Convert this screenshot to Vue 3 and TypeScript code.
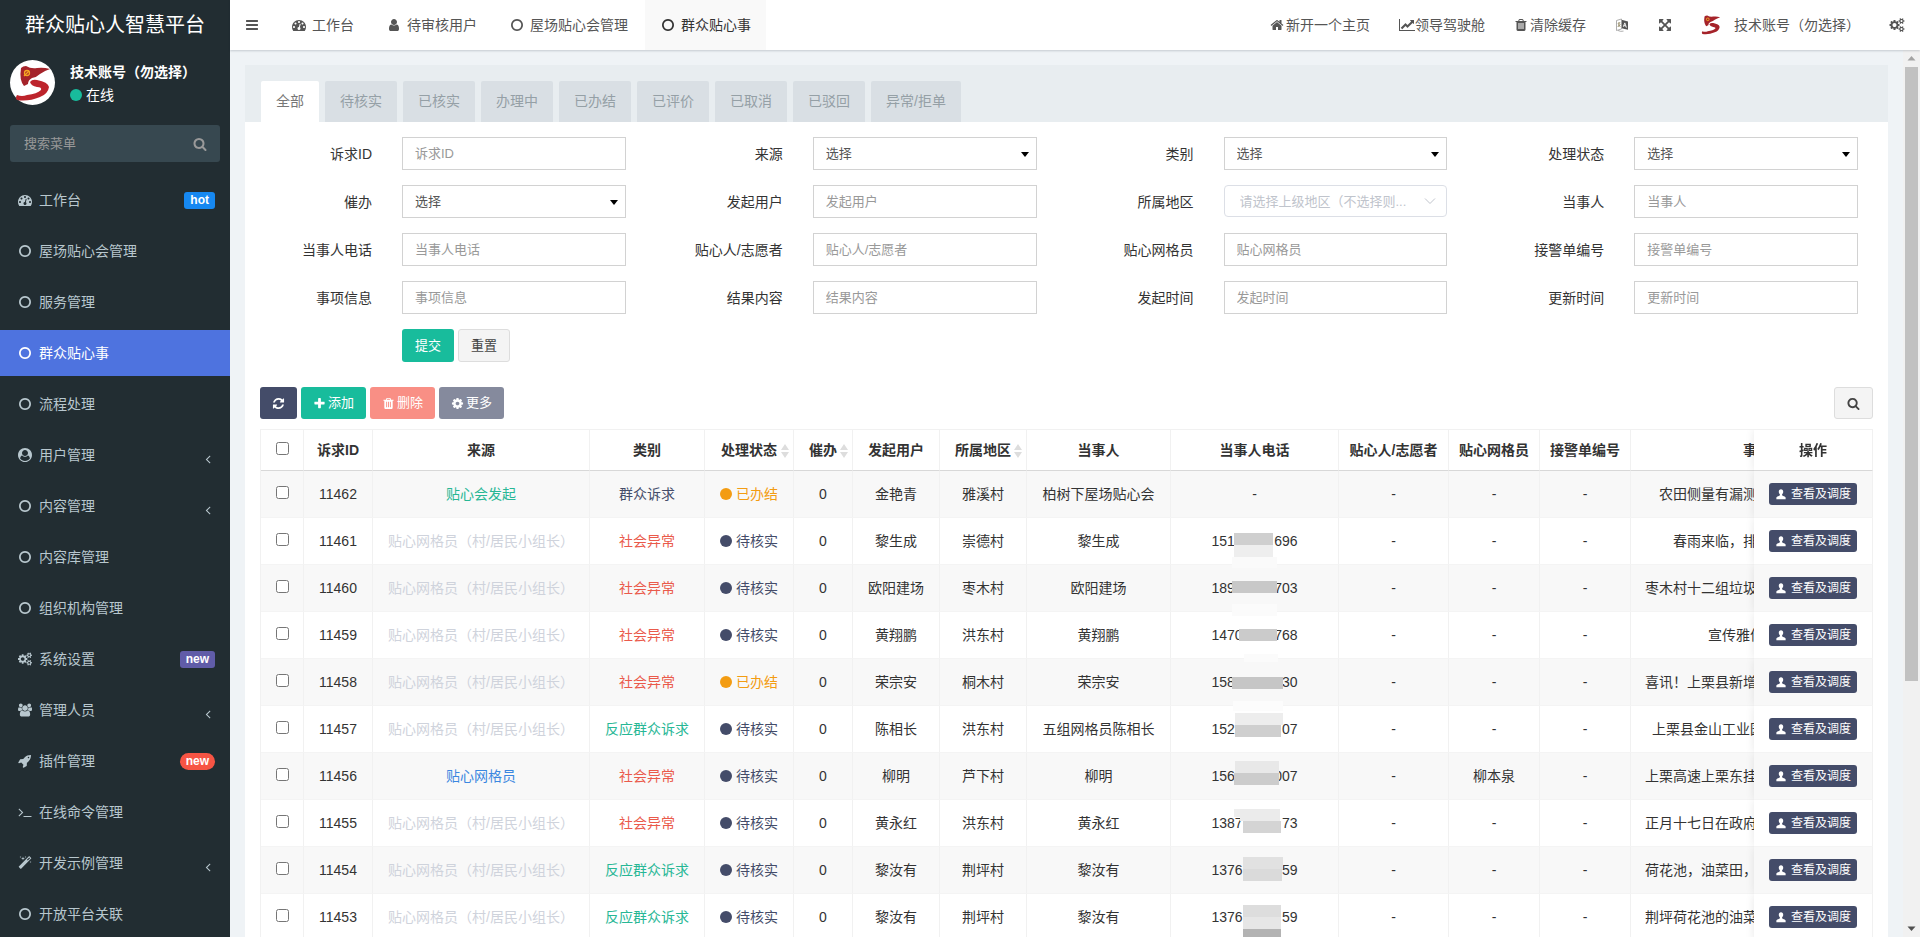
<script setup lang="ts">
import { ref } from 'vue'

interface Glyph { box: string; d: string }
interface MenuItem { icon: string; text: string; badge?: string; tone?: string; arrow?: boolean; active?: boolean }
interface Field { id: string; label: string; kind: 'text' | 'select' | 'region' }
interface Block { x: number; y: number; w: number; h: number; c: string }
interface Phone { head: string; tail: string; blocks: Block[] }
interface Row {
  id: number; source: string; sourceTone: string; kind: string; kindTone: string; done?: boolean
  user: string; area: string; party: string; phone?: Phone; grid?: string; text: string; chars: number
}

const square = '0 0 1792 1792'
const gearSmall = 'm640 533v140q0 16-149 31-12 27-30 52 51 113 51 138 0 4-4 7-122 71-124 71-8 0-46-47t-52-68q-20 2-30 2t-30-2q-14 21-52 68t-46 47q-2 0-124-71-4-3-4-7 0-25 51-138-18-25-30-52-149-15-149-31v-140q0-16 149-31 13-29 30-52-51-113-51-138 0-4 4-7 4-2 35-20t59-34 30-16q8 0 46 46.5t52 67.5q20-2 30-2t30 2q51-71 92-112l6-2q4 0 124 70 4 3 4 7 0 25-51 138 17 23 30 52 149 15 149 31zm0-1024v140q0 16-149 31-12 27-30 52 51 113 51 138 0 4-4 7-122 71-124 71-8 0-46-47t-52-68q-20 2-30 2t-30-2q-14 21-52 68t-46 47q-2 0-124-71-4-3-4-7 0-25 51-138-18-25-30-52-149-15-149-31v-140q0-16 149-31 13-29 30-52-51-113-51-138 0-4 4-7 4-2 35-20t59-34 30-16q8 0 46 46.5t52 67.5q20-2 30-2t30 2q51-71 92-112l6-2q4 0 124 70 4 3 4 7 0 25-51 138 17 23 30 52 149 15 149 31z'

const glyphs: Record<string, Glyph> = {
  bars: { box: square, d: 'M1664 1344v128q0 26-19 45t-45 19h-1408q-26 0-45-19t-19-45v-128q0-26 19-45t45-19h1408q26 0 45 19t19 45zm0-512v128q0 26-19 45t-45 19h-1408q-26 0-45-19t-19-45v-128q0-26 19-45t45-19h1408q26 0 45 19t19 45zm0-512v128q0 26-19 45t-45 19h-1408q-26 0-45-19t-19-45v-128q0-26 19-45t45-19h1408q26 0 45 19t19 45z' },
  ring: { box: square, d: 'M896 352q-148 0-273 73t-198 198-73 273 73 273 198 198 273 73 273-73 198-198 73-273-73-273-198-198-273-73zm768 544q0 209-103 385.5t-279.5 279.5-385.5 103-385.5-103-279.5-279.5-103-385.5 103-385.5 279.5-279.5 385.5-103 385.5 103 279.5 279.5 103 385.5z' },
  gauge: { box: square, d: 'M384 1152q0-53-37.5-90.5t-90.5-37.5-90.5 37.5-37.5 90.5 37.5 90.5 90.5 37.5 90.5-37.5 37.5-90.5zm192-448q0-53-37.5-90.5t-90.5-37.5-90.5 37.5-37.5 90.5 37.5 90.5 90.5 37.5 90.5-37.5 37.5-90.5zm428 481l101-382q6-26-7.5-48.5t-38.5-29.5-48 6.5-30 39.5l-101 382q-60 5-107 43.5t-63 98.5q-20 77 20 146t117 89 146-20 89-117q16-60-6-117t-72-91zm660-33q0-53-37.5-90.5t-90.5-37.5-90.5 37.5-37.5 90.5 37.5 90.5 90.5 37.5 90.5-37.5 37.5-90.5zm-640-640q0-53-37.5-90.5t-90.5-37.5-90.5 37.5-37.5 90.5 37.5 90.5 90.5 37.5 90.5-37.5 37.5-90.5zm448 192q0-53-37.5-90.5t-90.5-37.5-90.5 37.5-37.5 90.5 37.5 90.5 90.5 37.5 90.5-37.5 37.5-90.5zm320 448q0 261-141 483-19 29-54 29h-1402q-35 0-54-29-141-221-141-483 0-182 71-348t191-286 286-191 348-71 348 71 286 191 191 286 71 348z' },
  user: { box: square, d: 'M1536 1399q0 109-62.5 187t-150.5 78h-854q-88 0-150.5-78t-62.5-187q0-85 8.5-160.5t31.5-152 58.5-131 94-89 134.5-34.5q131 128 313 128t313-128q76 0 134.5 34.5t94 89 58.5 131 31.5 152 8.5 160.5zm-256-887q0 159-112.5 271.5t-271.5 112.5-271.5-112.5-112.5-271.5 112.5-271.5 271.5-112.5 271.5 112.5 112.5 271.5z' },
  home: { box: square, d: 'M1472 992v480q0 26-19 45t-45 19h-384v-384h-256v384h-384q-26 0-45-19t-19-45v-480q0-1 .5-3t.5-3l575-474 575 474q1 2 1 6zm223-69l-62 74q-8 9-21 11h-3q-13 0-21-7l-692-577-692 577q-12 8-24 7-13-2-21-11l-62-74q-8-10-7-23.5t11-21.5l719-599q32-26 76-26t76 26l244 204v-195q0-14 9-23t23-9h192q14 0 23 9t9 23v408l219 182q10 8 11 21.5t-7 23.5z' },
  chart: { box: '0 0 2048 1792', d: 'M2048 1536v128h-2048v-1536h128v1408h1920zm-128-1248v435q0 21-19.5 29.5t-35.5-7.5l-121-121-633 633q-10 10-23 10t-23-10l-233-233-416 416-192-192 585-585q10-10 23-10t23 10l233 233 464-464-121-121q-16-16-7.5-35.5t29.5-19.5h435q14 0 23 9t9 23z' },
  trash: { box: square, d: 'M704 1376v-704q0-14-9-23t-23-9h-64q-14 0-23 9t-9 23v704q0 14 9 23t23 9h64q14 0 23-9t9-23zm256 0v-704q0-14-9-23t-23-9h-64q-14 0-23 9t-9 23v704q0 14 9 23t23 9h64q14 0 23-9t9-23zm256 0v-704q0-14-9-23t-23-9h-64q-14 0-23 9t-9 23v704q0 14 9 23t23 9h64q14 0 23-9t9-23zm-544-992h448l-48-117q-7-9-17-11h-317q-10 2-17 11zm928 32v64q0 14-9 23t-23 9h-96v948q0 83-47 143.5t-113 60.5h-832q-66 0-113-58.5t-47-141.5v-952h-96q-14 0-23-9t-9-23v-64q0-14 9-23t23-9h309l70-167q15-37 54-63t79-26h320q40 0 79 26t54 63l70 167h309q14 0 23 9t9 23z' },
  expand: { box: square, d: 'M1411 541l-355 355 355 355 144-144q29-31 70-14 39 17 39 59v448q0 26-19 45t-45 19h-448q-42 0-59-40-17-39 14-69l144-144-355-355-355 355 144 144q31 30 14 69-17 40-59 40h-448q-26 0-45-19t-19-45v-448q0-42 40-59 39-17 69 14l144 144 355-355-355-355-144 144q-19 19-45 19-12 0-24-5-40-17-40-59v-448q0-26 19-45t45-19h448q42 0 59 40 17 39-14 69l-144 144 355 355 355-355-144-144q-31-30-14-69 17-40 59-40h448q26 0 45 19t19 45v448q0 42-39 59-13 5-25 5-26 0-45-19z' },
  gears: { box: '0 0 1920 1792', d: 'M896 896q0-106-75-181t-181-75-181 75-75 181 75 181 181 75 181-75 75-181zm768 512q0-52-38-90t-90-38-90 38-38 90q0 53 37.5 90.5t90.5 37.5 90.5-37.5 37.5-90.5zm0-1024q0-52-38-90t-90-38-90 38-38 90q0 53 37.5 90.5t90.5 37.5 90.5-37.5 37.5-90.5zm-384 421v185q0 10-7 19.5t-16 10.5l-155 24q-11 35-32 76 34 48 90 115 7 11 7 20 0 12-7 19-23 30-82.5 89.5t-78.5 59.5q-11 0-21-7l-115-90q-37 19-77 31-11 108-23 155-7 24-30 24h-186q-11 0-20-7.5t-10-17.5l-23-153q-34-10-75-31l-118 89q-7 7-20 7-11 0-21-8-144-133-144-160 0-9 7-19 10-14 41-53t47-61q-23-44-35-82l-152-24q-10-1-17-9.5t-7-19.5v-185q0-10 7-19.5t16-10.5l155-24q11-35 32-76-34-48-90-115-7-11-7-20 0-12 7-20 22-30 82-89t79-59q11 0 21 7l115 90q34-18 77-32 11-108 23-154 7-24 30-24h186q11 0 20 7.5t10 17.5l23 153q34 10 75 31l118-89q8-7 20-7 11 0 21 8 144 133 144 160 0 8-7 19-12 16-42 54t-45 60q23 48 34 82l152 23q10 2 17 10.5t7 19.5z' + gearSmall },
  search: { box: square, d: 'M1216 832q0-185-131.5-316.5t-316.5-131.5-316.5 131.5-131.5 316.5 131.5 316.5 316.5 131.5 316.5-131.5 131.5-316.5zm512 832q0 52-38 90t-90 38q-54 0-90-38l-343-342q-179 124-399 124-143 0-273.5-55.5t-225-150-150-225-55.5-273.5 55.5-273.5 150-225 225-150 273.5-55.5 273.5 55.5 225 150 150 225 55.5 273.5q0 220-124 399l343 343q37 37 37 90z' },
  account: { box: square, d: 'M1523 1339q-22-155-87.5-257.5t-184.5-118.5q-67 74-159.5 115.5t-195.5 41.5-195.5-41.5-159.5-115.5q-119 16-184.5 118.5t-87.5 257.5q106 150 271 237.5t356 87.5 356-87.5 271-237.5zm-243-699q0-159-112.5-271.5t-271.5-112.5-271.5 112.5-112.5 271.5 112.5 271.5 271.5 112.5 271.5-112.5 112.5-271.5zm512 256q0 182-71 347.5t-190.5 286-285.5 191.5-349 71q-182 0-348-71t-286-191-191-286-71-348 71-348 191-286 286-191 348-71 348 71 286 191 191 286 71 348z' },
  angle: { box: square, d: 'M1203 544q0 13-10 23l-393 393 393 393q10 10 10 23t-10 23l-50 50q-10 10-23 10t-23-10l-466-466q-10-10-10-23t10-23l466-466q10-10 23-10t23 10l50 50q10 10 10 23z' },
  group: { box: '0 0 1920 1792', d: 'M593 896q-162 5-265 128h-134q-82 0-138-40.5t-56-118.5q0-353 124-353 6 0 43.5 21t97.5 42.5 119 21.5q67 0 133-23-5 37-5 66 0 159 93 256zm1071 637q0 120-73 189.5t-194 69.5h-874q-121 0-194-69.5t-73-189.5q0-53 3.5-103.5t14-109 26.5-108.5 43-97.5 62-81 85.5-53.5 111.5-20q10 0 43 21.5t73 48 107 48 135 21.5 135-21.5 107-48 73-48 43-21.5q61 0 111.5 20t85.5 53.5 62 81 43 97.5 26.5 108.5 14 109 3.5 103.5zm-1024-1277q0 106-75 181t-181 75-181-75-75-181 75-181 181-75 181 75 75 181zm704 384q0 159-112.5 271.5t-271.5 112.5-271.5-112.5-112.5-271.5 112.5-271.5 271.5-112.5 271.5 112.5 112.5 271.5zm576 225q0 78-56 118.5t-138 40.5h-134q-103-123-265-128 93-97 93-256 0-29-5-66 66 23 133 23 59 0 119-21.5t97.5-42.5 43.5-21q124 0 124 353zm-128-609q0 106-75 181t-181 75-181-75-75-181 75-181 181-75 181 75 75 181z' },
  rocket: { box: square, d: 'M1440 448q0-40-28-68t-68-28-68 28-28 68 28 68 68 28 68-28 28-68zm224-288q0 249-75.5 430.5t-253.5 360.5q-81 80-195 176l-20 379q-2 16-16 26l-384 224q-7 4-16 4-12 0-23-9l-64-64q-13-14-8-32l85-276-281-281-276 85q-3 1-9 1-14 0-23-9l-64-64q-17-19-5-39l224-384q10-14 26-16l379-20q96-114 176-195 188-187 358-258t431-71q14 0 24 9.5t10 22.5z' },
  terminal: { box: square, d: 'M649 983l-466 466q-10 10-23 10t-23-10l-50-50q-10-10-10-23t10-23l393-393-393-393q-10-10-10-23t10-23l50-50q10-10 23-10t23 10l466 466q10 10 10 23t-10 23zm1079 457v64q0 14-9 23t-23 9h-960q-14 0-23-9t-9-23v-64q0-14 9-23t23-9h960q14 0 23 9t9 23z' },
  magic: { box: square, d: 'M1254 581l293-293-107-107-293 293zm447-293q0 27-18 45l-1286 1286q-18 18-45 18t-45-18l-198-198q-18-18-18-45t18-45l1286-1286q18-18 45-18t45 18l198 198q18 18 18 45zm-1351-190l98 30-98 30-30 98-30-98-98-30 98-30 30-98zm350 162l196 60-196 60-60 196-60-196-196-60 196-60 60-196zm930 478l98 30-98 30-30 98-30-98-98-30 98-30 30-98zm-640-640l98 30-98 30-30 98-30-98-98-30 98-30 30-98z' },
  refresh: { box: square, d: 'M1639 1056q0 5-1 7-64 268-268 434.5t-478 166.5q-146 0-282.5-55t-243.5-157l-129 129q-19 19-45 19t-45-19-19-45v-448q0-26 19-45t45-19h448q26 0 45 19t19 45-19 45l-137 137q71 66 161 102t187 36q134 0 250-65t186-179q11-17 53-117 8-23 30-23h192q13 0 22.5 9.5t9.5 22.5zm25-800v448q0 26-19 45t-45 19h-448q-26 0-45-19t-19-45 19-45l138-138q-148-137-349-137-134 0-250 65t-186 179q-11 17-53 117-8 23-30 23h-199q-13 0-22.5-9.5t-9.5-22.5v-7q65-268 270-434.5t480-166.5q146 0 284 55.5t245 156.5l130-129q19-19 45-19t45 19 19 45z' },
  plus: { box: square, d: 'M1600 736v192q0 40-28 68t-68 28h-416v416q0 40-28 68t-68 28h-192q-40 0-68-28t-28-68v-416h-416q-40 0-68-28t-28-68v-192q0-40 28-68t68-28h416v-416q0-40 28-68t68-28h192q40 0 68 28t28 68v416h416q40 0 68 28t28 68z' },
  gear: { box: square, d: 'M1152 896q0-106-75-181t-181-75-181 75-75 181 75 181 181 75 181-75 75-181zm512-109v222q0 12-8 23t-20 13l-185 28q-19 54-39 91 35 50 107 138 10 12 10 25t-9 23q-27 37-99 108t-94 71q-12 0-26-9l-138-108q-44 23-91 38-16 136-29 186-7 28-36 28h-222q-14 0-24.5-8.5t-11.5-21.5l-28-184q-49-16-90-37l-141 107q-10 9-25 9-14 0-25-11-126-114-165-168-7-10-7-23 0-12 8-23 15-21 51-66.5t54-70.5q-27-50-41-99l-183-27q-13-2-21-12.5t-8-23.5v-222q0-12 8-23t19-13l186-28q14-46 39-92-40-57-107-138-10-12-10-24 0-10 9-23 26-36 98.5-107.5t94.5-71.5q13 0 26 10l138 107q44-23 91-38 16-136 29-186 7-28 36-28h222q14 0 24.5 8.5t11.5 21.5l28 184q49 16 90 37l142-107q9-9 24-9 13 0 25 10 129 119 165 170 7 8 7 22 0 12-8 23-15 21-51 66.5t-54 70.5q26 50 41 98l183 28q13 2 21 12.5t8 23.5z' },
  person: { box: '-1 -1 14 14', d: 'M6 .6c1.7 0 2.6 1.2 2.6 2.8 0 1.3-.6 2.4-1.3 3v1c.3.5 1 .8 2 1.2 1.4.5 2.1.9 2.1 1.7v1.700H.6v-1.700c0-.8.7-1.200 2.100-1.700 1-.4 1.700-.7 2-1.200v-1c-.7-.6-1.300-1.700-1.300-3C3.400 1.800 4.300.6 6 .6z' },
}

const ribbon = {
  flag: 'M11 8Q13 6 16 6 21 9 27 8 33 7 40 9 34 11 30 14 27 17 22 18 18 20 18 24L14 26Q9 20 11 8z',
  curve: 'M20 22Q22 19 27 20 38 22 39 27 38 34 30 37 18 42 7 40 5 38 7 35 12 37 17 35 27 34 31 30 32 27 27 27 21 26 20 22z',
}

const menu: MenuItem[] = [
  { icon: 'gauge', text: '工作台', badge: 'hot', tone: 'blue' },
  { icon: 'ring', text: '屋场贴心会管理' },
  { icon: 'ring', text: '服务管理' },
  { icon: 'ring', text: '群众贴心事', active: true },
  { icon: 'ring', text: '流程处理' },
  { icon: 'account', text: '用户管理', arrow: true },
  { icon: 'ring', text: '内容管理', arrow: true },
  { icon: 'ring', text: '内容库管理' },
  { icon: 'ring', text: '组织机构管理' },
  { icon: 'gears', text: '系统设置', badge: 'new', tone: 'purple' },
  { icon: 'group', text: '管理人员', arrow: true },
  { icon: 'rocket', text: '插件管理', badge: 'new', tone: 'red' },
  { icon: 'terminal', text: '在线命令管理' },
  { icon: 'magic', text: '开发示例管理', arrow: true },
  { icon: 'ring', text: '开放平台关联' },
]

const pages = [
  { icon: 'gauge', text: '工作台' },
  { icon: 'user', text: '待审核用户' },
  { icon: 'ring', text: '屋场贴心会管理' },
  { icon: 'ring', text: '群众贴心事', active: true },
]

const statusTabs = ['全部', '待核实', '已核实', '办理中', '已办结', '已评价', '已取消', '已驳回', '异常/拒单']
const currentTab = ref('全部')

const fields: Field[] = [
  { id: 'f-id', label: '诉求ID', kind: 'text' },
  { id: 'f-source', label: '来源', kind: 'select' },
  { id: 'f-type', label: '类别', kind: 'select' },
  { id: 'f-status', label: '处理状态', kind: 'select' },
  { id: 'f-urge', label: '催办', kind: 'select' },
  { id: 'f-user', label: '发起用户', kind: 'text' },
  { id: 'f-area', label: '所属地区', kind: 'region' },
  { id: 'f-party', label: '当事人', kind: 'text' },
  { id: 'f-phone', label: '当事人电话', kind: 'text' },
  { id: 'f-helper', label: '贴心人/志愿者', kind: 'text' },
  { id: 'f-grid', label: '贴心网格员', kind: 'text' },
  { id: 'f-police', label: '接警单编号', kind: 'text' },
  { id: 'f-info', label: '事项信息', kind: 'text' },
  { id: 'f-result', label: '结果内容', kind: 'text' },
  { id: 'f-start', label: '发起时间', kind: 'text' },
  { id: 'f-update', label: '更新时间', kind: 'text' },
]

const gridman = '贴心网格员（村/居民小组长）'
const rows: Row[] = [
  { id: 11462, source: '贴心会发起', sourceTone: 'green', kind: '群众诉求', kindTone: 'navy', done: true, user: '金艳青', area: '雅溪村', party: '柏树下屋场贴心会', text: '农田侧量有漏测', chars: 16 },
  { id: 11461, source: gridman, sourceTone: 'pale', kind: '社会异常', kindTone: 'red', user: '黎生成', area: '崇德村', party: '黎生成', phone: { head: '151', tail: '696', blocks: [{ x: 2, y: 10, w: 39, h: 12, c: '#cfcfcf' }, { x: 2, y: 22, w: 39, h: 12, c: '#eeeeee' }, { x: 0, y: 34, w: 45, h: 11, c: '#fafafa' }] }, text: '春雨来临，排', chars: 14 },
  { id: 11460, source: gridman, sourceTone: 'pale', kind: '社会异常', kindTone: 'red', user: '欧阳建场', area: '枣木村', party: '欧阳建场', phone: { head: '189', tail: '703', blocks: [{ x: 0, y: 11, w: 45, h: 12, c: '#c8c8c8' }, { x: 0, y: 34, w: 45, h: 12, c: '#fbfbfb' }] }, text: '枣木村十二组垃圾', chars: 18 },
  { id: 11459, source: gridman, sourceTone: 'pale', kind: '社会异常', kindTone: 'red', user: '黄翔鹏', area: '洪东村', party: '黄翔鹏', phone: { head: '1470', tail: '768', blocks: [{ x: 7, y: 12, w: 38, h: 12, c: '#cbcbcb' }, { x: 12, y: 37, w: 34, h: 8, c: '#fbfbfb' }] }, text: '宣传雅信', chars: 9 },
  { id: 11458, source: gridman, sourceTone: 'pale', kind: '社会异常', kindTone: 'red', done: true, user: '荣宗安', area: '桐木村', party: '荣宗安', phone: { head: '158', tail: '30', blocks: [{ x: 0, y: 13, w: 51, h: 12, c: '#c6c6c6' }, { x: 1, y: 37, w: 50, h: 10, c: '#fcfcfc' }] }, text: '喜讯！上栗县新增', chars: 18 },
  { id: 11457, source: gridman, sourceTone: 'pale', kind: '反应群众诉求', kindTone: 'green', user: '陈相长', area: '洪东村', party: '五组网格员陈相长', phone: { head: '152', tail: '07', blocks: [{ x: 3, y: 2, w: 48, h: 12, c: '#ededed' }, { x: 3, y: 14, w: 46, h: 12, c: '#cfcfcf' }] }, text: '上栗县金山工业园', chars: 17 },
  { id: 11456, source: '贴心网格员', sourceTone: 'blue', kind: '社会异常', kindTone: 'red', user: '柳明', area: '芦下村', party: '柳明', phone: { head: '156', tail: '007', blocks: [{ x: 3, y: 3, w: 44, h: 12, c: '#e8e8e8' }, { x: 2, y: 15, w: 45, h: 12, c: '#cccccc' }] }, grid: '柳本泉', text: '上栗高速上栗东挂', chars: 18 },
  { id: 11455, source: gridman, sourceTone: 'pale', kind: '社会异常', kindTone: 'red', user: '黄永红', area: '洪东村', party: '黄永红', phone: { head: '1387', tail: '73', blocks: [{ x: 2, y: 4, w: 13, h: 8, c: '#eeeeee' }, { x: 8, y: 4, w: 40, h: 12, c: '#ebebeb' }, { x: 11, y: 16, w: 38, h: 12, c: '#d4d4d4' }] }, text: '正月十七日在政府', chars: 18 },
  { id: 11454, source: gridman, sourceTone: 'pale', kind: '反应群众诉求', kindTone: 'green', user: '黎汝有', area: '荆坪村', party: '黎汝有', phone: { head: '1376', tail: '59', blocks: [{ x: 11, y: 5, w: 40, h: 12, c: '#e1e1e1' }, { x: 11, y: 17, w: 39, h: 12, c: '#dadada' }] }, text: '荷花池，油菜田，', chars: 18 },
  { id: 11453, source: gridman, sourceTone: 'pale', kind: '反应群众诉求', kindTone: 'green', user: '黎汝有', area: '荆坪村', party: '黎汝有', phone: { head: '1376', tail: '59', blocks: [{ x: 11, y: 6, w: 38, h: 12, c: '#dddddd' }, { x: 11, y: 18, w: 38, h: 12, c: '#e6e6e6' }, { x: 11, y: 30, w: 38, h: 12, c: '#b3b3b3' }] }, text: '荆坪荷花池的油菜', chars: 18 },
]
</script>

<template>
  <div class="app">
    <aside class="side">
      <a class="brand" href="#">群众贴心人智慧平台</a>
      <div class="who">
        <span class="avatar">
          <svg viewBox="0 0 45 45" aria-hidden="true">
            <path :d="ribbon.flag" fill="#a5232a" />
            <path :d="ribbon.curve" fill="#bd242c" />
            <circle cx="17" cy="13" r="2.500" fill="none" stroke="#f5a623" stroke-width="1.300" />
            <path d="M14 16l5-5" stroke="#f5a623" stroke-width="1.200" />
          </svg>
        </span>
        <div class="who-text">
          <strong>技术账号（勿选择）</strong>
          <span><i class="dot online"></i>在线</span>
        </div>
      </div>
      <form class="find" @submit.prevent>
        <input type="text" placeholder="搜索菜单" aria-label="搜索菜单">
        <button type="submit" aria-label="搜索"><svg class="ico" :viewBox="glyphs.search.box"><path :d="glyphs.search.d" /></svg></button>
      </form>
      <nav class="menu">
        <a v-for="m in menu" :key="m.text" href="#" :class="{ active: m.active }">
          <span class="slot"><svg class="ico" :viewBox="glyphs[m.icon].box"><path :d="glyphs[m.icon].d" /></svg></span>
          <span class="grow">{{ m.text }}</span>
          <em v-if="m.badge" class="badge" :class="m.tone">{{ m.badge }}</em>
          <svg v-if="m.arrow" class="ico arrow" :viewBox="glyphs.angle.box"><path :d="glyphs.angle.d" /></svg>
        </a>
      </nav>
    </aside>

    <div class="main">
      <header class="top">
        <button class="burger" type="button" aria-label="菜单"><svg class="ico" :viewBox="glyphs.bars.box"><path :d="glyphs.bars.d" /></svg></button>
        <nav class="pages">
          <a v-for="p in pages" :key="p.text" href="#" :class="{ active: p.active }">
            <span class="slot"><svg class="ico" :viewBox="glyphs[p.icon].box"><path :d="glyphs[p.icon].d" /></svg></span>{{ p.text }}
          </a>
        </nav>
        <nav class="tools">
          <a href="#"><svg class="ico" :viewBox="glyphs.home.box"><path :d="glyphs.home.d" /></svg><span class="gap">新开一个主页</span></a>
          <a href="#"><svg class="ico wide" :viewBox="glyphs.chart.box"><path :d="glyphs.chart.d" /></svg>领导驾驶舱</a>
          <a href="#"><svg class="ico" :viewBox="glyphs.trash.box"><path :d="glyphs.trash.d" /></svg><span class="gap">清除缓存</span></a>
          <a href="#" aria-label="语言">
            <svg class="ico" viewBox="0 0 14 14">
              <path d="M6.500 1.800l6.500 1.600v8.400l-6.500-1.600z" />
              <path d="M1.500 2.500L6.500 1v10l-5 1.500z" fill="#fff" stroke="#999" stroke-width=".8" />
              <path d="M2.700 5.500l2.600-.8M4 4v5M2.600 9l3-3M3 6.500l2.500 2" fill="none" stroke="#8a7f58" stroke-width=".7" />
              <path d="M8.300 8.800l1.500-3.900 1.600 4.700M8.800 7.500l2 .5" fill="none" stroke="#fff" stroke-width=".9" />
              <path d="M3 12.500q2.500 1.400 5.500.6" fill="none" stroke="#999" stroke-width=".8" />
            </svg>
          </a>
          <a href="#" aria-label="全屏"><svg class="ico" :viewBox="glyphs.expand.box"><path :d="glyphs.expand.d" /></svg></a>
          <a href="#" class="me">
            <svg viewBox="5 5 36 37" aria-hidden="true">
              <path :d="ribbon.flag" fill="#a5232a" />
              <path :d="ribbon.curve" fill="#a5232a" />
              <circle cx="17" cy="13" r="2.500" fill="none" stroke="#f5a623" stroke-width="1.800" />
            </svg>技术账号（勿选择）
          </a>
          <a href="#" aria-label="设置"><svg class="ico wide" :viewBox="glyphs.gears.box"><path :d="glyphs.gears.d" /></svg></a>
        </nav>
      </header>

      <div class="stage">
        <main class="page">
          <section class="panel">
            <nav class="tabs">
              <a v-for="t in statusTabs" :key="t" href="#" :class="{ active: t === currentTab }" @click.prevent="currentTab = t">{{ t }}</a>
            </nav>
            <form class="filters" @submit.prevent>
              <div v-for="f in fields" :key="f.id" class="field">
                <label :for="f.id">{{ f.label }}</label>
                <div class="control">
                  <template v-if="f.kind === 'select'">
                    <select :id="f.id"><option>选择</option></select>
                    <svg class="caret" viewBox="0 0 8 5" aria-hidden="true"><path d="M0 0h8L4 5z" /></svg>
                  </template>
                  <template v-else-if="f.kind === 'region'">
                    <input :id="f.id" class="region" type="text" placeholder="请选择上级地区（不选择则...">
                    <svg class="chevron" viewBox="0 0 12 12" aria-hidden="true"><path d="M1 3.500l5 5 5-5" /></svg>
                  </template>
                  <input v-else :id="f.id" type="text" :placeholder="f.label">
                </div>
              </div>
              <div class="field">
                <div class="submit">
                  <button class="btn green" type="submit">提交</button>
                  <button class="btn plain" type="reset">重置</button>
                </div>
              </div>
            </form>

            <div class="toolbar">
              <button class="btn navy" type="button" aria-label="刷新"><svg class="ico" :viewBox="glyphs.refresh.box"><path :d="glyphs.refresh.d" /></svg></button>
              <button class="btn green" type="button"><svg class="ico" :viewBox="glyphs.plus.box"><path :d="glyphs.plus.d" /></svg>添加</button>
              <button class="btn red faded" type="button"><svg class="ico" :viewBox="glyphs.trash.box"><path :d="glyphs.trash.d" /></svg>删除</button>
              <button class="btn navy faded" type="button"><svg class="ico" :viewBox="glyphs.gear.box"><path :d="glyphs.gear.d" /></svg>更多</button>
              <button class="btn plain last" type="button" aria-label="搜索"><svg class="ico" :viewBox="glyphs.search.box"><path :d="glyphs.search.d" /></svg></button>
            </div>

            <div class="scroller">
              <table>
                <colgroup>
                  <col class="w43"><col class="w69"><col class="w217"><col class="w115"><col class="w89"><col class="w59"><col class="w87"><col class="w87"><col class="w144"><col class="w168"><col class="w110"><col class="w91"><col class="w91"><col class="w281"><col class="w119">
                </colgroup>
                <thead>
                  <tr>
                    <th><input type="checkbox" aria-label="全选"></th>
                    <th>诉求ID</th>
                    <th>来源</th>
                    <th>类别</th>
                    <th>处理状态<svg class="sort" viewBox="0 0 8 14" aria-hidden="true"><path d="M4 0l4 6H0zM0 8h8l-4 6z" /></svg></th>
                    <th>催办<svg class="sort" viewBox="0 0 8 14" aria-hidden="true"><path d="M4 0l4 6H0zM0 8h8l-4 6z" /></svg></th>
                    <th>发起用户</th>
                    <th>所属地区<svg class="sort" viewBox="0 0 8 14" aria-hidden="true"><path d="M4 0l4 6H0zM0 8h8l-4 6z" /></svg></th>
                    <th>当事人</th>
                    <th>当事人电话</th>
                    <th>贴心人/志愿者</th>
                    <th>贴心网格员</th>
                    <th>接警单编号</th>
                    <th><span class="clip" :style="{ width: '4em' }">事</span></th>
                    <th class="fixed">操作</th>
                  </tr>
                </thead>
                <tbody>
                  <tr v-for="r in rows" :key="r.id">
                    <td><input type="checkbox" :aria-label="String(r.id)"></td>
                    <td>{{ r.id }}</td>
                    <td><a href="#" :class="'t-' + r.sourceTone">{{ r.source }}</a></td>
                    <td><a href="#" :class="'t-' + r.kindTone">{{ r.kind }}</a></td>
                    <td><span class="state" :class="r.done ? 't-orange' : 't-navy'"><i class="dot"></i>{{ r.done ? '已办结' : '待核实' }}</span></td>
                    <td>0</td>
                    <td>{{ r.user }}</td>
                    <td>{{ r.area }}</td>
                    <td>{{ r.party }}</td>
                    <td>
                      <span v-if="r.phone" class="phone">
                        <span>{{ r.phone.head }}</span><span>{{ r.phone.tail }}</span>
                        <svg viewBox="0 0 52 48" aria-hidden="true"><rect v-for="(b, i) in r.phone.blocks" :key="i" :x="b.x" :y="b.y" :width="b.w" :height="b.h" :fill="b.c" /></svg>
                      </span>
                      <template v-else>-</template>
                    </td>
                    <td>-</td>
                    <td>{{ r.grid ?? '-' }}</td>
                    <td>-</td>
                    <td><span class="clip" :style="{ width: r.chars + 'em' }">{{ r.text }}</span></td>
                    <td class="fixed"><button class="look" type="button"><svg class="ico" :viewBox="glyphs.person.box"><path :d="glyphs.person.d" /></svg>查看及调度</button></td>
                  </tr>
                </tbody>
              </table>
            </div>
          </section>
        </main>
        <div class="rail" aria-hidden="true">
          <svg viewBox="0 0 17 17"><path d="M4.500 10.500h8l-4-4.500z" fill="#a3a3a3" /></svg>
          <div class="track"><div class="thumb"></div></div>
          <svg viewBox="0 0 17 17"><path d="M4.500 6.500h8l-4 4.500z" fill="#505050" /></svg>
        </div>
      </div>
    </div>
  </div>
</template>

<style>
body { margin: 0; }
</style>

<style scoped>
.app, .app * { box-sizing: border-box; }
.app { display: flex; height: 100vh; overflow: hidden; font: 14px/20px "Liberation Sans", "Noto Sans CJK SC", sans-serif; color: #333; background: #eff3f6; }
a { color: inherit; text-decoration: none; }
button, input, select { font: inherit; margin: 0; }
button { cursor: pointer; }
.ico { width: 14px; height: 14px; fill: currentColor; flex: none; display: block; }
.ico.wide { width: 16px; }
.slot { display: flex; justify-content: center; width: 16px; flex: none; }
.dot { display: inline-block; width: 12px; height: 12px; border-radius: 50%; background: currentColor; flex: none; }

.side { width: 230px; flex: none; background: #222d32; color: #b8c7ce; overflow: hidden; }
.brand { display: block; height: 50px; line-height: 50px; font-size: 20px; text-align: center; color: #fff; }
.who { display: flex; align-items: center; gap: 15px; padding: 10px; color: #fff; }
.avatar { width: 45px; height: 45px; border-radius: 50%; background: #fff; flex: none; }
.avatar svg { display: block; }
.who-text { display: grid; gap: 3px; padding-top: 2px; white-space: nowrap; }
.who-text span { display: flex; align-items: center; gap: 4px; }
.online { color: #18bc9c; }
.find { display: flex; align-items: center; margin: 10px; height: 37px; background: #374850; border-radius: 3px; }
.find input { flex: 1; min-width: 0; height: 37px; padding: 0 14px; border: 0; background: none; color: #fff; font-size: 13px; }
.find input::placeholder { color: #999; }
.find button { border: 0; background: none; color: #999; padding: 0 13px; }
.menu { display: grid; gap: 5px; padding-top: 5px; }
.menu a { display: flex; align-items: center; gap: 6px; height: 46px; padding: 0 15px 0 17px; }
.menu a.active { background: #4e73df; color: #fff; }
.grow { flex: 1; }
.menu .arrow { margin: 8px 0 0; }
.badge { font: bold 12px/17px "Liberation Sans", sans-serif; color: #fff; padding: 0 6px; border-radius: 3px; }
.badge.blue { background: #1688f1; }
.badge.purple { background: #605ca8; }
.badge.red { background: #f75444; border-radius: 9px; }

.main { flex: 1; min-width: 0; display: flex; flex-direction: column; }
.top { display: flex; height: 50px; flex: none; background: #fff; box-shadow: 0 1px 2px rgba(0, 21, 41, .18); position: relative; z-index: 3; color: #555; }
.burger { border: 0; background: none; color: inherit; width: 46px; padding: 0 0 0 15px; }
.pages { display: flex; gap: 2px; }
.pages a { display: flex; align-items: center; gap: 5px; padding: 0 15px; }
.pages a.active { background: #f9f9f9; color: #333; }
.tools { display: flex; align-items: center; gap: 29px; margin-left: auto; padding-right: 15px; }
.tools a { display: flex; align-items: center; }
.tools .gap { margin-left: 2px; }
.tools .me { gap: 13px; }
.me svg { width: 20px; height: 20px; }

.stage { flex: 1; min-height: 0; display: flex; }
.page { flex: 1; min-width: 0; padding: 15px; overflow: hidden; }
.rail { width: 17px; flex: none; display: flex; flex-direction: column; background: #f1f1f1; }
.rail svg { width: 17px; height: 17px; display: block; }
.track { flex: 1; padding: 0 2px; }
.thumb { height: 72%; background: #c1c1c1; }

.panel { background: #fff; }
.tabs { display: flex; gap: 6px; padding: 16px 16px 0; background: #e8edf0; }
.tabs a { padding: 10px 15px 11px; background: #d9dfe4; color: #95a0a6; border-radius: 2px 2px 0 0; }
.tabs a.active { background: #fff; color: #777; }
.filters { display: grid; grid-template-columns: repeat(4, 1fr); row-gap: 15px; padding: 15px 0 0; }
.field { display: grid; grid-template-columns: 127px 1fr; column-gap: 30px; padding-right: 30px; height: 33px; }
.field label { text-align: right; padding-top: 7px; white-space: nowrap; }
.control { position: relative; }
.control input, .control select { width: 100%; height: 33px; padding: 0 12px; border: 1px solid #d2d2d2; border-radius: 0; background: #fff; color: #555; font-size: 13px; appearance: none; }
.control input::placeholder { color: #999; }
.control input.region { height: 32px; border-color: #dcdfe6; border-radius: 4px; padding: 0 40px 0 15px; }
.control input.region::placeholder { color: #c0c4cc; }
.caret { position: absolute; right: 8px; top: 15px; width: 8px; height: 5px; }
.chevron { position: absolute; right: 11px; top: 10px; width: 12px; height: 12px; fill: none; stroke: #c0c4cc; }
.submit { grid-column: 2; display: flex; gap: 4px; }
.btn { display: inline-flex; align-items: center; justify-content: center; gap: 3px; height: 33px; padding: 0 12px; border: 1px solid transparent; border-radius: 3px; color: #fff; font-size: 13px; white-space: nowrap; }
.btn .ico { width: 13px; height: 13px; }
.green { background: #18bc9c; }
.navy { background: #444c69; }
.red { background: #f75444; }
.btn.faded { opacity: .65; }
.btn.plain { background: #f4f4f4; border-color: #ddd; color: #444; }

.toolbar { display: flex; gap: 4px; padding: 25px 15px 10px; }
.toolbar .btn { height: 32px; padding: 0 11px; gap: 2px; }
.toolbar .btn.last { margin-left: auto; padding: 0 12px; }

.scroller { margin: 0 15px; overflow: hidden; border-left: 1px solid #f1f1f1; border-top: 1px solid #f1f1f1; }
table { table-layout: fixed; width: 1770px; border-collapse: separate; border-spacing: 0; text-align: center; }
.w43 { width: 43px; } .w69 { width: 69px; } .w217 { width: 217px; } .w115 { width: 115px; } .w89 { width: 89px; }
.w59 { width: 59px; } .w87 { width: 87px; } .w144 { width: 144px; } .w168 { width: 168px; } .w110 { width: 110px; }
.w91 { width: 91px; } .w281 { width: 281px; } .w119 { width: 119px; }
th, td { padding: 0; border-right: 1px solid #f1f1f1; white-space: nowrap; }
th { height: 41px; border-bottom: 1px solid #d8d8d8; font-weight: bold; position: relative; }
td { height: 47px; border-bottom: 1px solid #f4f4f4; }
tbody tr td { background: #fff; }
tbody tr:nth-child(odd) td { background: #f8f8f8; }
table input { display: block; width: 13px; height: 13px; margin: 0 auto 3px; }
.sort { position: absolute; right: 4px; top: 14px; width: 8px; height: 14px; fill: #ddd; }
.fixed { position: sticky; right: 0; z-index: 2; box-shadow: -1px 0 8px rgba(0, 0, 0, .08); clip-path: inset(0 0 0 -10px); }
th.fixed { background: #fff; }
.clip { display: inline-block; text-align: left; }
.state { display: inline-flex; align-items: center; gap: 4px; }
.t-green { color: #27b795; }
.t-navy { color: #444c69; }
.t-red { color: #ea5a4b; }
.t-pale { color: #cfd3dc; }
.t-blue { color: #3b87e0; }
.t-orange { color: #f39c12; }
.phone { position: relative; display: inline-flex; justify-content: space-between; width: 86px; }
.phone svg { position: absolute; left: 20px; top: -8px; width: 52px; height: 48px; overflow: visible; }
.look { display: inline-flex; align-items: center; gap: 4px; height: 22px; padding: 0 6px; border: 0; border-radius: 3px; background: #444c69; color: #fff; font-size: 12px; }
.look .ico { width: 12px; height: 12px; }
</style>
